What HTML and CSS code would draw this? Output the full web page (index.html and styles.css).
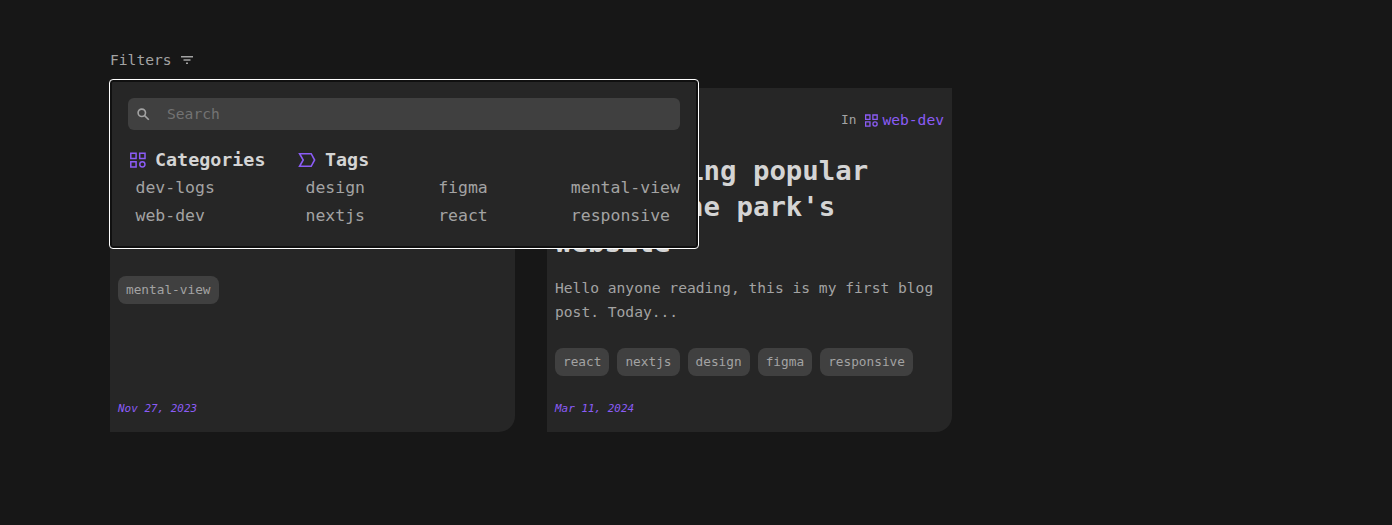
FILE: index.html
```html
<!DOCTYPE html>
<html lang="en">
<head>
<meta charset="utf-8">
<title>Blog</title>
<link rel="stylesheet" href="styles.css">
</head>
<body>
<svg class="sprite" aria-hidden="true">
  <symbol id="category" viewBox="0 0 16 16">
    <path d="M.8 1.2h5.3v5.3H.8zM9.7 1.2H15v5.3H9.7zM.8 9.7h5.3V15H.8z"/>
    <circle cx="12.35" cy="12.35" r="2.6"/>
  </symbol>
</svg>
<main class="page">
  <div class="filters">
    <button class="filters-toggle">Filters
      <svg class="filter-icon" viewBox="0 0 12 8"><path d="M0 .7h12M2.5 4h7M5 7.3h2"/></svg>
    </button>
    <section class="panel">
      <label class="search">
        <svg class="search-icon" viewBox="0 0 13 13"><circle cx="4.8" cy="4.8" r="3.7"/><path d="M7.6 7.6l4.2 4.2"/></svg>
        <input class="search-input" type="text" placeholder="Search">
      </label>
      <div class="groups">
        <div class="group">
          <h2 class="group-title"><svg class="group-icon"><use href="#category"/></svg>Categories</h2>
          <ul class="options"><li>dev-logs</li><li>web-dev</li></ul>
        </div>
        <div class="group">
          <h2 class="group-title"><svg class="tag-icon" viewBox="0 0 18 16"><path d="M1.6 1.7h11.6L16.6 8l-3.4 6.3H1.6L5.2 8z"/></svg>Tags</h2>
          <ul class="options options-tags"><li>design</li><li>figma</li><li>mental-view</li><li>nextjs</li><li>react</li><li>responsive</li></ul>
        </div>
      </div>
    </section>
  </div>
  <div class="cards">
    <article class="card card-brief">
      <div class="pills"><span class="pill">mental-view</span></div>
      <time class="date">Nov 27, 2023</time>
    </article>
    <article class="card">
      <div class="card-top">In <a class="card-category"><svg class="card-icon"><use href="#category"/></svg>web-dev</a></div>
      <h3 class="card-title">Redesigning popular across the park's website</h3>
      <p class="card-text">Hello anyone reading, this is my first blog post. Today...</p>
      <div class="pills"><span class="pill">react</span><span class="pill">nextjs</span><span class="pill">design</span><span class="pill">figma</span><span class="pill">responsive</span></div>
      <time class="date">Mar 11, 2024</time>
    </article>
  </div>
</main>
</body>
</html>
```
FILE: styles.css
```css
* { box-sizing: border-box; margin: 0; padding: 0; }
body {
  background: #171717;
  color: #a3a3a3;
  font: 14.62px/24px "DejaVu Sans Mono", monospace;
  overflow: hidden;
}
svg { fill: none; stroke: currentColor; flex: none; }
.sprite { display: none; }
.page { padding: 48px 110px 0; }
.filters { position: relative; height: 40px; }
.filters-toggle {
  display: flex;
  align-items: center;
  gap: 9px;
  border: 0;
  background: none;
  color: inherit;
  font: inherit;
}
.filter-icon { width: 12px; height: 8px; stroke-width: 1.4; }
.panel {
  position: absolute;
  z-index: 2;
  top: 31px;
  left: -1px;
  width: 590px;
  height: 170px;
  padding: 18px;
  border: 1px solid #fff;
  border-radius: 4px;
  background: #262626;
  box-shadow: inset 0 0 0 2px #101010;
}
.search {
  display: flex;
  align-items: center;
  gap: 17px;
  height: 32px;
  padding: 0 9px;
  border-radius: 6px;
  background: #404040;
}
.search-icon { width: 13px; height: 13px; stroke-width: 1.6; }
.search-input {
  flex: 1;
  border: 0;
  outline: 0;
  background: none;
  color: inherit;
  font: inherit;
}
.search-input::placeholder { color: #737373; opacity: 1; }
.groups {
  display: grid;
  grid-template-columns: 138px 382px;
  gap: 32px;
  margin-top: 16px;
}
.group-title {
  display: flex;
  align-items: center;
  height: 28px;
  color: #d4d4d4;
  font-size: 18.35px;
  line-height: 28px;
}
.group-icon, .tag-icon, .card-icon { color: #8b5cf6; }
.group-icon { width: 16px; height: 16px; margin: 0 9px 0 2px; stroke-width: 1.5; }
.tag-icon { width: 18px; height: 16px; margin-right: 9px; stroke-width: 1.6; }
.options {
  padding-left: 7.5px;
  list-style: none;
  font-size: 16.48px;
  line-height: 28px;
}
.options-tags {
  display: grid;
  grid-template-columns: repeat(3, 116.67px);
  column-gap: 16px;
}
.cards { display: grid; grid-template-columns: 405px 405px; gap: 32px; }
.card {
  display: flex;
  flex-direction: column;
  height: 344px;
  padding: 20px 8px 11px;
  border-radius: 0 0 16px 0;
  background: #262626;
}
.card-brief { padding-top: 164px; }
.card-top {
  display: flex;
  justify-content: flex-end;
  align-items: center;
  gap: 9px;
  height: 24px;
  font-size: 12.79px;
}
.card-category {
  display: flex;
  align-items: center;
  gap: 4px;
  color: #8b5cf6;
  font-size: 14.62px;
}
.card-icon { width: 13px; height: 13px; stroke-width: 1.6; }
.card-title {
  margin-top: 21px;
  color: #d4d4d4;
  font-size: 27.4px;
  line-height: 36px;
}
.card-text { margin-top: 15px; }
.pills { display: flex; gap: 8px; margin-top: 24px; }
.pill {
  height: 28px;
  padding: 0 8px;
  border-radius: 8px;
  background: #404040;
  font-size: 12.77px;
  line-height: 28px;
}
.date {
  margin-top: auto;
  color: #8b5cf6;
  font-size: 10.96px;
  font-style: italic;
}
```
